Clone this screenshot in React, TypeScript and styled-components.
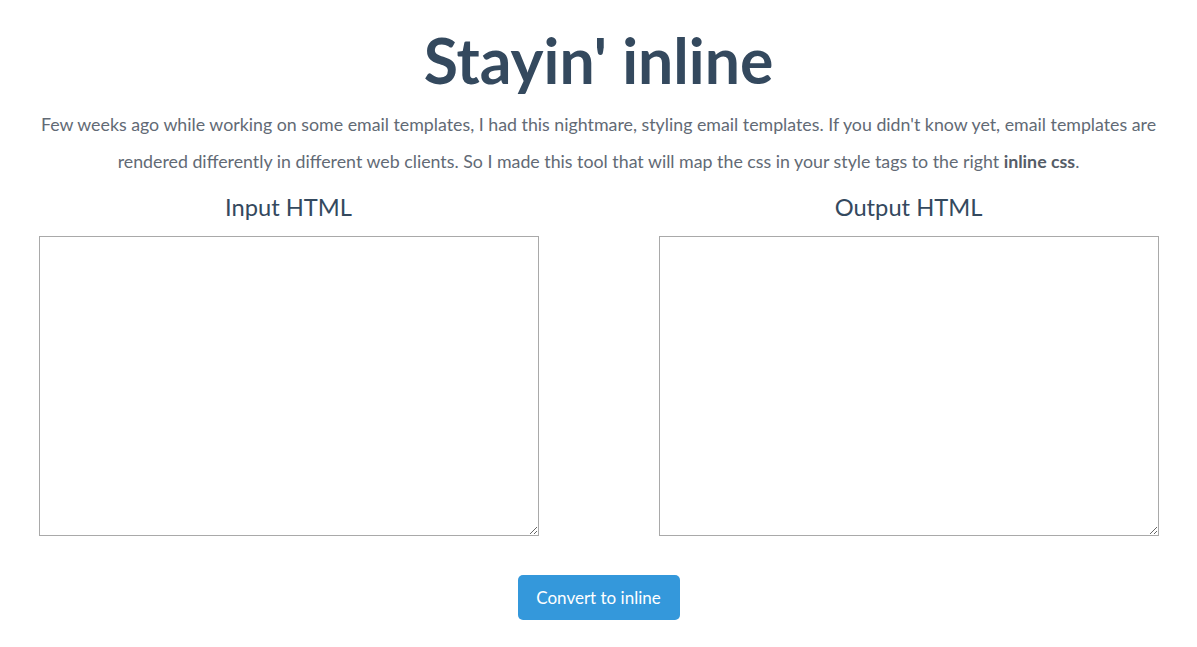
import React from "react";
import styled, { createGlobalStyle } from "styled-components";

const Global = createGlobalStyle`
  html, body { margin: 0; padding: 0; background: #ffffff; }
  body { font-family: Lato, "Open Sans", sans-serif; }
`;

const Page = styled.main`
  display: flex;
  flex-direction: column;
  align-items: center;
  padding: 20px 38px 0;
`;

const Title = styled.h1`
  margin: 0;
  font-family: Lato, sans-serif;
  font-weight: 700;
  font-size: 62.5px;
  line-height: 80px;
  color: #34495e;
`;

const Intro = styled.p`
  margin: 6px 0 0;
  font-size: 17.8px;
  line-height: 37px;
  color: #626a75;
  text-align: center;
  strong { font-weight: 700; color: #555d68; }
`;

const Editors = styled.div`
  display: grid;
  grid-template-columns: 500px 500px;
  column-gap: 120px;
  margin-top: 12px;
`;

const Column = styled.section`
  display: flex;
  flex-direction: column;
  align-items: center;
`;

const Heading = styled.h2`
  margin: 0 0 14px;
  font-size: 23.7px;
  font-weight: 400;
  line-height: 30px;
  color: #34495e;
`;

const Area = styled.textarea`
  box-sizing: border-box;
  width: 500px;
  height: 300px;
  border: 1px solid #a9a9a9;
  padding: 2px;
  margin: 0;
  font-family: "Liberation Mono", monospace;
  font-size: 13px;
  resize: both;
`;

const Button = styled.button`
  margin-top: 39px;
  width: 162px;
  height: 45px;
  border: none;
  border-radius: 5px;
  background: #3498db;
  color: #ffffff;
  font-family: Lato, sans-serif;
  font-size: 17px;
  cursor: pointer;
`;

export default function App() {
  return (
    <>
      <Global />
      <Page>
        <Title>Stayin' inline</Title>
        <Intro>
          Few weeks ago while working on some email templates, I had this nightmare, styling email templates. If you didn't know yet, email templates are rendered differently in different web clients. So I made this tool that will map the css in your style tags to the right <strong>inline css</strong>.
        </Intro>
        <Editors>
          <Column>
            <Heading>Input HTML</Heading>
            <Area />
          </Column>
          <Column>
            <Heading>Output HTML</Heading>
            <Area />
          </Column>
        </Editors>
        <Button>Convert to inline</Button>
      </Page>
    </>
  );
}
